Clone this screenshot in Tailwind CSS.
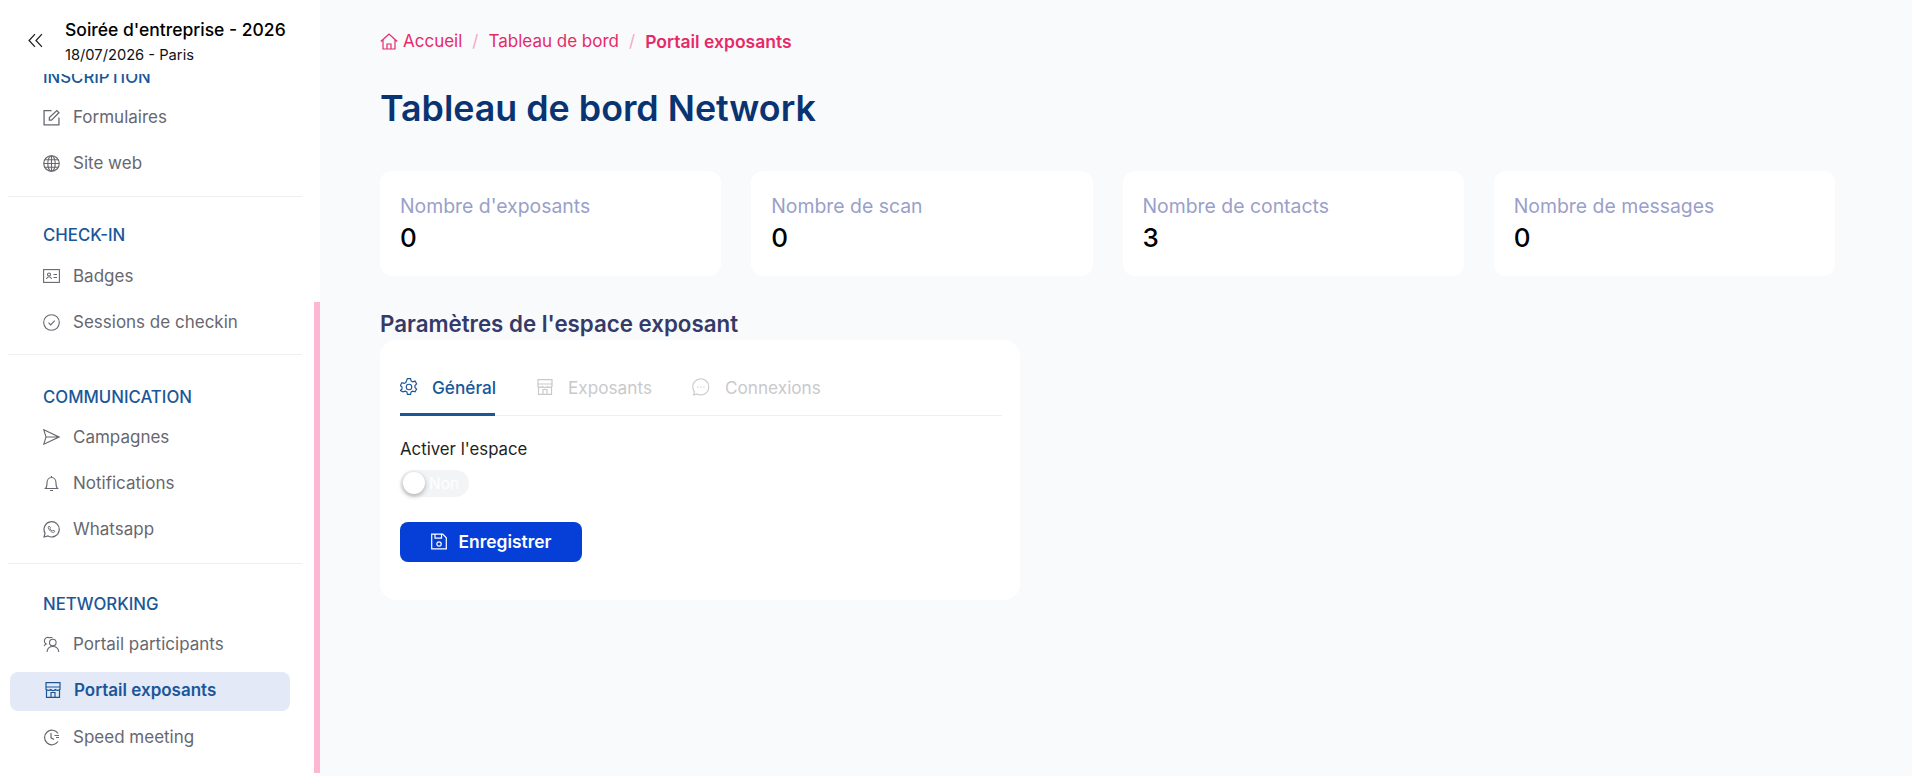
<!DOCTYPE html>
<html lang="fr"><head><meta charset="utf-8"><title>Tableau de bord Network</title>
<script src="https://cdn.jsdelivr.net/npm/@tailwindcss/browser@4"></script></head>
<body class="m-0 bg-[#f9fafc] font-['Inter','Liberation_Sans',sans-serif]">
<div class="flex h-[776px] w-[1912px] overflow-hidden">
<aside class="relative w-[320px] shrink-0 bg-white flex flex-col overflow-hidden">
  <div class="relative h-[74px] shrink-0 bg-white flex items-start pl-[28px] pt-[18px] gap-[23px] z-10">
    <svg class="w-[15px] h-[15px] mt-[15px] text-[#222]" viewBox="0 0 14 14" fill="none" stroke="currentColor" stroke-width="1.2"><path d="M6.5 1 1 7l5.500 6M13 1 7.500 7l5.500 6"/></svg>
    <div class="-ml-[1px]">
      <div class="text-[17.500px] leading-[24px] font-medium text-black">Soirée d'entreprise - 2026</div>
      <div class="text-[14.700px] leading-[27px] text-[#111]">18/07/2026 - Paris</div>
    </div>
  </div>
  <nav class="flex flex-col -mt-[9px]">
    <div class="px-[43px] h-[24px] leading-[24px] text-[16.800px] font-medium text-[#1a5799]">INSCRIPTION</div>
    <a class="mt-[6px] h-[46px] flex items-center pl-[43px] gap-[13px] text-[17px] text-[#67676f]"><svg class="w-[17px] h-[17px] mb-[2px]" viewBox="0 0 16 16" fill="none" stroke="currentColor" stroke-width="1.2"><path d="M8 1.500H1v13.500h14V8"/><path d="M6 10.500V8l7-6.500 2 2-7 7z" /></svg>Formulaires</a>
    <a class="h-[46px] flex items-center pl-[43px] gap-[13px] text-[17px] text-[#67676f]"><svg class="w-[17px] h-[17px] mb-[2px]" viewBox="0 0 16 16" fill="none" stroke="currentColor" stroke-width="1.100"><circle cx="8" cy="8" r="7.300"/><ellipse cx="8" cy="8" rx="3.500" ry="7.300"/><path d="M8 .7v14.600M.7 8h14.600M1.700 4.500h12.600M1.700 11.500h12.600"/></svg>Site web</a>
    <div class="mx-[8px] w-[294px] border-t border-[#eeeff1] mt-[9px]"></div>
    <div class="px-[43px] mt-[26px] h-[24px] leading-[24px] text-[16.800px] font-medium text-[#1a5799]">CHECK-IN</div>
    <a class="mt-[7px] h-[46px] flex items-center pl-[43px] gap-[13px] text-[17px] text-[#67676f]"><svg class="w-[17px] h-[14px] mb-[2px]" viewBox="0 0 17 14" fill="none" stroke="currentColor" stroke-width="1.100"><rect x=".6" y=".6" width="15.800" height="12.800"/><circle cx="6" cy="5.500" r="1.500"/><path d="M3.500 10c.3-1.600 1.300-2.200 2.500-2.200s2.200.6 2.500 2.200M10.500 5.500h3.500M10.500 8.500h3.500"/></svg>Badges</a>
    <a class="h-[46px] flex items-center pl-[43px] gap-[13px] text-[17px] text-[#67676f]"><svg class="w-[17px] h-[17px] mb-[2px]" viewBox="0 0 17 17" fill="none" stroke="currentColor" stroke-width="1.100"><circle cx="8.500" cy="8.500" r="7.800"/><path d="m5.500 8.700 2.200 2.200 4-4.300"/></svg>Sessions de checkin</a>
    <div class="mx-[8px] w-[294px] border-t border-[#eeeff1] mt-[8px]"></div>
    <div class="px-[43px] mt-[30px] h-[24px] leading-[24px] text-[16.800px] font-medium text-[#1a5799]">COMMUNICATION</div>
    <a class="mt-[6px] h-[46px] flex items-center pl-[43px] gap-[13px] text-[17px] text-[#67676f]"><svg class="w-[17px] h-[16px] mb-[2px]" viewBox="0 0 17 16" fill="none" stroke="currentColor" stroke-width="1.100"><path d="M.8.8 16 8 .8 15.200 3 8zM3 8h13"/></svg>Campagnes</a>
    <a class="h-[46px] flex items-center pl-[43px] gap-[13px] text-[17px] text-[#67676f]"><svg class="w-[17px] h-[17px] mb-[2px]" viewBox="0 0 17 17" fill="none" stroke="currentColor" stroke-width="1.100"><path d="M2.500 13.500h12c-1.200-1-1.500-2.500-1.500-5.500 0-3-1.800-5.500-4.500-5.500S4 5 4 8c0 3-.3 4.500-1.500 5.500zM7 15.500h3M8.500 1v1.500"/></svg>Notifications</a>
    <a class="h-[46px] flex items-center pl-[43px] gap-[13px] text-[17px] text-[#67676f]"><svg class="w-[17px] h-[17px] mb-[2px]" viewBox="0 0 17 17" fill="none" stroke="currentColor" stroke-width="1.200"><path d="M1 16l1.100-3.800A7.600 7.600 0 1 1 5 15z"/><path d="M6 5c-.8.6-.9 1.700-.3 2.900 1 1.800 2.400 3 4 3.500 1.100.2 1.900-.3 2.100-1.200l-1.800-1-.8.800c-1-.4-1.800-1.200-2.300-2.300l.8-.8z" stroke-width=".9"/></svg>Whatsapp</a>
    <div class="mx-[8px] w-[294px] border-t border-[#eeeff1] mt-[10px]"></div>
    <div class="px-[43px] mt-[28px] h-[24px] leading-[24px] text-[16.800px] font-medium text-[#1a5799]">NETWORKING</div>
    <a class="mt-[6px] h-[46px] flex items-center pl-[43px] gap-[13px] text-[17px] text-[#67676f]"><svg class="w-[17px] h-[17px] mb-[2px]" viewBox="0 0 17 17" fill="none" stroke="currentColor" stroke-width="1.100"><circle cx="9.800" cy="6.500" r="3.300"/><path d="M4 16c.4-3.500 2.700-5.500 5.800-5.500S15.400 12.500 15.800 16M1 10c.6-1 1.300-1.700 2.200-2.100A3.400 3.400 0 0 1 6.500 1.800c1.200-.5 2-.5 3 0"/></svg>Portail participants</a>
    <a class="h-[39px] mt-[3.500px] mb-[4.500px] mx-[10px] w-[280px] rounded-[8px] bg-[#e4e9f7] flex items-center pl-[35px] gap-[13px] text-[17px] font-semibold text-[#1a5799]"><svg class="w-[16px] h-[16px] mb-[2px]" viewBox="0 0 16 16" fill="none" stroke="currentColor" stroke-width="1.200"><path d="M1 .7h14v4.300H1zM1 5h14l0 2.500c-2 1.300-3.500 1-4.700 0-1.300 1.200-3.200 1.200-4.600 0-1.200 1-2.700 1.300-4.700 0zM1.500 8v7.300h13V8M6 15.300v-4.800h4v4.800"/></svg>Portail exposants</a>
    <a class="h-[46px] flex items-center pl-[43px] gap-[13px] text-[17px] text-[#67676f]"><svg class="w-[17px] h-[17px] mb-[2px]" viewBox="0 0 17 17" fill="none" stroke="currentColor" stroke-width="1.200"><path d="M15 4.500A7.300 7.300 0 1 0 15 12.500M8 4v4.800l3 1.700M11.500 6.500h4.500M13 8.500h3"/></svg>Speed meeting</a>
  </nav>
  <div class="absolute right-0 top-[302px] h-[471px] w-[6px] bg-[#fdb7d0] z-20"></div>
</aside>
<main class="flex-1 pl-[60px] pr-[77px] pt-[30px]">
  <nav class="flex items-center h-[24px] text-[17px] text-[#e62a68]">
    <svg class="w-[18px] h-[17px] mr-[5px] mb-[2px]" viewBox="0 0 18 17" fill="none" stroke="currentColor" stroke-width="1.200"><path d="M.8 8.500 9 1l8.200 7.500M3 6.700V16h12V6.700M7 16v-5h4v5"/></svg>
    <span>Accueil</span><span class="mx-[10px] text-[#f5a8c2]">/</span><span>Tableau de bord</span><span class="mx-[10px] text-[#f5a8c2]">/</span><span class="font-semibold text-[17.500px]">Portail exposants</span>
  </nav>
  <h1 class="mt-[26px] text-[35.800px] leading-[56px] font-semibold text-[#0a3372]">Tableau de bord Network</h1>
  <div class="mt-[35px] grid grid-cols-4 gap-[30px]">
    <div class="h-[105px] rounded-[12px] bg-white px-[20px] pt-[21px]"><div class="text-[19.400px] leading-[28px] text-[#9a9fc9]">Nombre d'exposants</div><div class="mt-[2px] text-[26px] leading-[32px] font-medium text-black">0</div></div>
    <div class="h-[105px] rounded-[12px] bg-white px-[20px] pt-[21px]"><div class="text-[19.400px] leading-[28px] text-[#9a9fc9]">Nombre de scan</div><div class="mt-[2px] text-[26px] leading-[32px] font-medium text-black">0</div></div>
    <div class="h-[105px] rounded-[12px] bg-white px-[20px] pt-[21px]"><div class="text-[19.400px] leading-[28px] text-[#9a9fc9]">Nombre de contacts</div><div class="mt-[2px] text-[26px] leading-[32px] font-medium text-black">3</div></div>
    <div class="h-[105px] rounded-[12px] bg-white px-[20px] pt-[21px]"><div class="text-[19.400px] leading-[28px] text-[#9a9fc9]">Nombre de messages</div><div class="mt-[2px] text-[26px] leading-[32px] font-medium text-black">0</div></div>
  </div>
  <h2 class="mt-[31px] text-[22.300px] leading-[33px] font-semibold text-[#353a66]">Paramètres de l'espace exposant</h2>
  <section class="w-[640px] h-[260px] rounded-[16px] bg-white pl-[20px] pr-[18px] pt-[27px]">
    <div class="flex border-b border-[#eceef2] h-[49px] items-start text-[17.200px] leading-[28px]">
      <div class="box-content h-[39px] pt-[7px] border-b-[3px] border-[#1a5799] flex items-start gap-[14px] text-[#1a5799] font-medium w-[95px] whitespace-nowrap"><svg class="w-[18px] h-[18px] mt-[4px] shrink-0" viewBox="0 0 17 17" fill="none" stroke="currentColor" stroke-width="1.100"><circle cx="8.500" cy="8.500" r="2.600"/><path d="M7 .6h3l.5 2.200 1.500.8 2.200-.7 1.500 2.700-1.600 1.500v1.800l1.600 1.500-1.500 2.700-2.200-.7-1.500.8-.5 2.200H7l-.5-2.200-1.500-.8-2.200.7L.3 11.900l1.600-1.500V8.600L.3 7.100 1.800 4.400l2.200.7 1.500-.8z"/></svg>Général</div>
      <div class="ml-[42px] pt-[7px] flex items-start gap-[15px] text-[#c9c9cc]"><svg class="w-[16px] h-[16px] mt-[5px]" viewBox="0 0 16 16" fill="none" stroke="currentColor" stroke-width="1.200"><path d="M1 .7h14v4.300H1zM1 5h14l0 2.500c-2 1.300-3.500 1-4.700 0-1.300 1.200-3.200 1.200-4.600 0-1.200 1-2.700 1.300-4.700 0zM1.500 8v7.300h13V8M6 15.300v-4.800h4v4.800"/></svg>Exposants</div>
      <div class="ml-[40px] pt-[7px] flex items-start gap-[15px] text-[#c9c9cc]"><svg class="w-[18px] h-[18px] mt-[4px]" viewBox="0 0 18 18" fill="none" stroke="currentColor" stroke-width="1.100"><path d="M1.500 17l1-3.200A8 8 0 1 1 5 15.900z"/><path d="M5.700 9h.6M8.700 9h.6M11.700 9h.6" stroke-linecap="round"/></svg>Connexions</div>
    </div>
    <div class="mt-[21px] text-[16.800px] leading-[24px] text-[#1f1f24]">Activer l'espace</div>
    <div class="relative mt-[9px] w-[69px] h-[27px] rounded-full bg-[#f3f4f6] pl-[29px] text-[15.500px] leading-[27px] text-white">Non<span class="absolute left-[3px] top-[2px] w-[22px] h-[22px] rounded-full bg-white shadow-[0_2px_5px_rgba(0,0,0,0.3)]"></span></div>
    <button class="mt-[25px] w-[182px] h-[40px] rounded-[8px] bg-[#063fd8] flex items-center justify-center gap-[12px] text-[17.400px] font-semibold text-white"><svg class="w-[16px] h-[17px] mb-[1px]" viewBox="0 0 16 16" fill="none" stroke="currentColor" stroke-width="1.200"><path d="M.7.7h11l3.600 3.600v11H.7zM4 .7v4h6.500v-4"/><circle cx="8" cy="10.500" r="2.200"/></svg>Enregistrer</button>
  </section>
</main>
</div>
</body></html>
